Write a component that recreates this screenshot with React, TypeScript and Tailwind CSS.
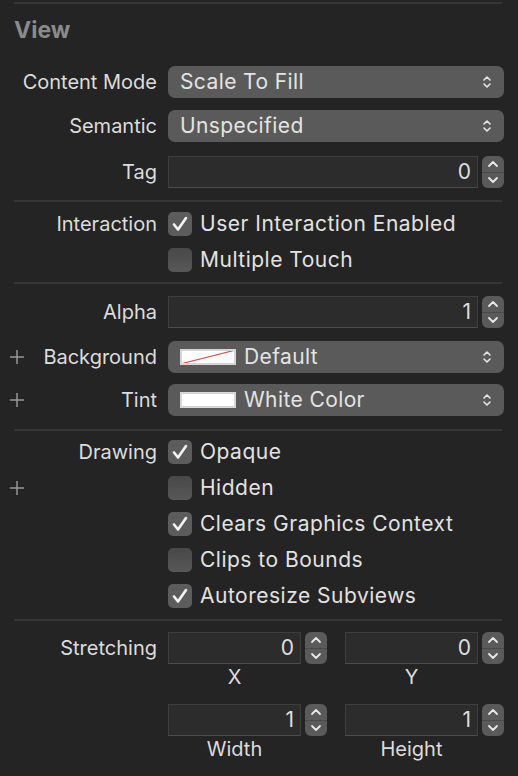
import React from "react";

const font = { fontFamily: "Inter, 'Liberation Sans', sans-serif" };

function Chevrons() {
  return (
    <svg width="10" height="16" viewBox="0 0 10 16" fill="none" stroke="#e6e6e6" strokeWidth="1.6" strokeLinecap="round" strokeLinejoin="round">
      <path d="M2 6 L5 3 L8 6" />
      <path d="M2 10 L5 13 L8 10" />
    </svg>
  );
}

function Plus() {
  return (
    <svg width="14" height="14" viewBox="0 0 14 14" stroke="#a0a0a0" strokeWidth="1.4">
      <line x1="7" y1="0" x2="7" y2="14" />
      <line x1="0" y1="7" x2="14" y2="7" />
    </svg>
  );
}

function Stepper() {
  return (
    <div className="w-[22px] h-[32px] rounded-[6px] bg-[#5a5a5a] flex flex-col shrink-0">
      <div className="flex-1 flex items-center justify-center border-b border-[#4a4a4a]">
        <svg width="12" height="8" viewBox="0 0 12 8" fill="none" stroke="#e8e8e8" strokeWidth="1.8" strokeLinecap="round" strokeLinejoin="round">
          <path d="M2 6 L6 2 L10 6" />
        </svg>
      </div>
      <div className="flex-1 flex items-center justify-center">
        <svg width="12" height="8" viewBox="0 0 12 8" fill="none" stroke="#e8e8e8" strokeWidth="1.8" strokeLinecap="round" strokeLinejoin="round">
          <path d="M2 2 L6 6 L10 2" />
        </svg>
      </div>
    </div>
  );
}

function NumberField({ value }: { value: string }) {
  return (
    <div className="flex items-center gap-[4px] flex-1">
      <div className="flex-1 h-[32px] bg-[#2c2c2c] border border-[#3e3e3e] border-b-[#4c4c4c] flex items-center justify-end pr-[6px] text-[21px] text-[#dedede]">
        {value}
      </div>
      <Stepper />
    </div>
  );
}

function Popup({ text, swatch }: { text: string; swatch?: "none" | "white" }) {
  return (
    <div className="flex-1 h-[32px] rounded-[7px] bg-[#5a5a5a] flex items-center pl-[12px] pr-[12px] text-[21px] tracking-[0.4px] text-[#e4e4e4]">
      {swatch && (
        <div className="w-[56px] h-[16px] bg-[#d6d6d6] p-[2px] mr-[8px] shrink-0">
          <div className="w-full h-full bg-white">
            {swatch === "none" && (
              <svg width="100%" height="100%" viewBox="0 0 52 12" preserveAspectRatio="none">
                <line x1="-2" y1="13" x2="54" y2="-1" stroke="#e0453a" strokeWidth="1.2" />
              </svg>
            )}
          </div>
        </div>
      )}
      <span className="flex-1">{text}</span>
      <Chevrons />
    </div>
  );
}

function Checkbox({ checked, label }: { checked: boolean; label: string }) {
  return (
    <div className="flex items-center h-[24px]">
      <div
        className={`w-[24px] h-[24px] rounded-[5px] flex items-center justify-center shrink-0 ${
          checked ? "bg-[#5c5c5c]" : "bg-gradient-to-b from-[#484848] to-[#585858]"
        }`}
      >
        {checked && (
          <svg width="18" height="18" viewBox="0 0 18 18" fill="none" stroke="#f4f4f4" strokeWidth="2.6" strokeLinecap="round" strokeLinejoin="round">
            <path d="M3 9.5 L7 14.5 L15 3" />
          </svg>
        )}
      </div>
      <span className="ml-[8px] text-[21px] tracking-[0.5px] text-[#e2e2e2] whitespace-nowrap">{label}</span>
    </div>
  );
}

function Row({ label, plus, children, className = "" }: { label?: string; plus?: boolean; children: React.ReactNode; className?: string }) {
  return (
    <div className={`flex items-start ${className}`}>
      <div className="w-[143px] flex items-center shrink-0 h-[32px]">
        <span className="w-[20px] -ml-[4px] flex items-center">{plus && <Plus />}</span>
        <span className="flex-1 text-right text-[20px] text-[#dcdcdc] whitespace-nowrap">{label}</span>
      </div>
      <div className="ml-[11px] flex-1 flex">{children}</div>
    </div>
  );
}

function Divider({ className = "" }: { className?: string }) {
  return <div className={`h-[2px] bg-[#363636] mr-[2px] ${className}`} />;
}

function Pair({ a, b, la, lb }: { a: string; b: string; la: string; lb: string }) {
  return (
    <div className="flex-1 flex gap-[18px]">
      <div className="flex-1 flex flex-col">
        <NumberField value={a} />
        <div className="text-center pr-[26px] text-[20px] text-[#dcdcdc] h-[26px] leading-[26px]">{la}</div>
      </div>
      <div className="flex-1 flex flex-col">
        <NumberField value={b} />
        <div className="text-center pr-[26px] text-[20px] text-[#dcdcdc] h-[26px] leading-[26px]">{lb}</div>
      </div>
    </div>
  );
}

export default function App() {
  return (
    <div className="w-[518px] h-[776px] bg-[#242424] overflow-hidden pl-[14px] pr-[14px]" style={font}>
      <Divider className="mt-[2px]" />
      <div className="h-[52px] flex items-center text-[23px] font-bold text-[#8b8b8b]">View</div>

      <Row label="Content Mode" className="mt-[10px]">
        <Popup text="Scale To Fill" />
      </Row>
      <Row label="Semantic" className="mt-[12px]">
        <Popup text="Unspecified" />
      </Row>
      <Row label="Tag" className="mt-[14px]">
        <NumberField value="0" />
      </Row>

      <Divider className="mt-[12px]" />

      <div className="flex mt-[10px]">
        <div className="w-[143px] h-[24px] flex items-center justify-end text-[20px] text-[#dcdcdc]">Interaction</div>
        <div className="ml-[11px] flex flex-col gap-[12px]">
          <Checkbox checked label="User Interaction Enabled" />
          <Checkbox checked={false} label="Multiple Touch" />
        </div>
      </div>

      <Divider className="mt-[10px]" />

      <Row label="Alpha" className="mt-[12px]">
        <NumberField value="1" />
      </Row>
      <Row label="Background" plus className="mt-[13px]">
        <Popup text="Default" swatch="none" />
      </Row>
      <Row label="Tint" plus className="mt-[11px]">
        <Popup text="White Color" swatch="white" />
      </Row>

      <Divider className="mt-[13px]" />

      <div className="flex mt-[9px]">
        <div className="w-[143px] shrink-0 flex flex-col">
          <div className="h-[24px] flex items-center justify-end text-[20px] text-[#dcdcdc]">Drawing</div>
          <div className="h-[24px] mt-[12px] flex items-center -ml-[4px]">
            <Plus />
          </div>
        </div>
        <div className="ml-[11px] flex flex-col gap-[12px]">
          <Checkbox checked label="Opaque" />
          <Checkbox checked={false} label="Hidden" />
          <Checkbox checked label="Clears Graphics Context" />
          <Checkbox checked={false} label="Clips to Bounds" />
          <Checkbox checked label="Autoresize Subviews" />
        </div>
      </div>

      <Divider className="mt-[11px]" />

      <Row label="Stretching" className="mt-[11px]">
        <Pair a="0" b="0" la="X" lb="Y" />
      </Row>
      <Row className="mt-[14px]">
        <Pair a="1" b="1" la="Width" lb="Height" />
      </Row>
    </div>
  );
}
